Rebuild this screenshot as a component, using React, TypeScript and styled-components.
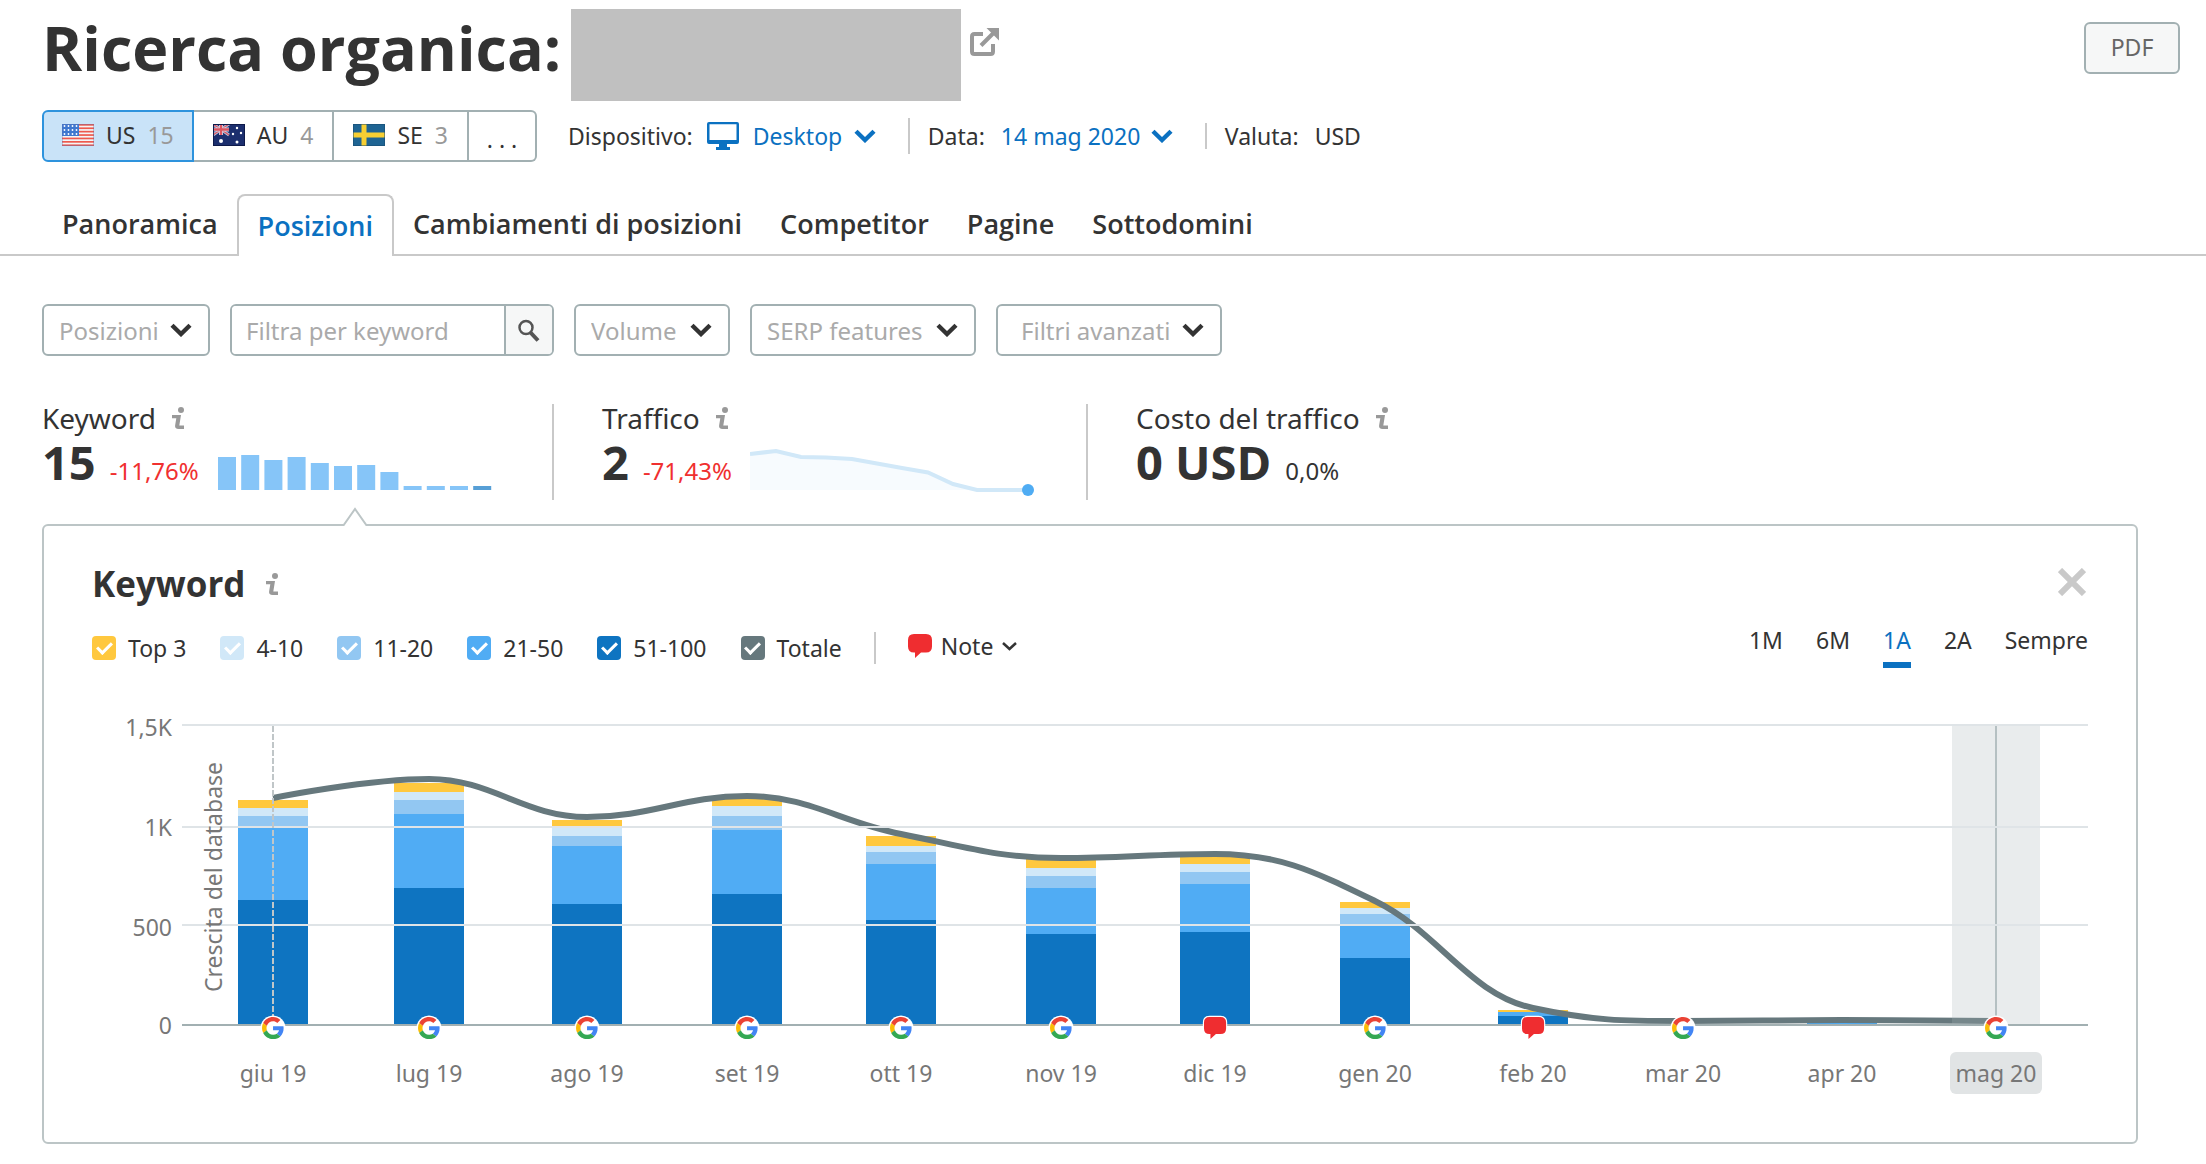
import React from "react";
import styled, { createGlobalStyle } from "styled-components";

const color = {
  text: "#333333",
  muted: "#999999",
  axis: "#777777",
  blue: "#0b71c1",
  red: "#f0302f",
  border: "#a2b0b2",
  line: "#c9c9c9",
  panel: "#bcc5c6",
  soft: "#f6f7f7",
};

const series = {
  top3: "#ffc83e",
  top10: "#d1e8f8",
  top20: "#92c7f2",
  top50: "#50acf4",
  top100: "#0e74c1",
  total: "#66787d",
};

const GlobalStyle = createGlobalStyle`
  *, *::before, *::after { box-sizing: border-box; }
  body {
    margin: 0;
    background: #ffffff;
    color: ${color.text};
    font-family: "Noto Sans", "Open Sans", sans-serif;
    font-size: 23px;
    line-height: 32px;
  }
  button, input, select { font: inherit; color: inherit; }
  svg { display: block; flex: none; }
`;

const Page = styled.main`
  padding: 9px 0 20px;
`;

const Header = styled.header`
  display: flex;
  align-items: flex-start;
  padding: 0 26px 0 42px;
`;

const Title = styled.h1`
  margin: 0;
  min-width: 529px;
  font-family: "Open Sans", "Noto Sans", sans-serif;
  font-size: 61px;
  line-height: 78px;
  font-weight: 700;
  white-space: nowrap;
`;

const DomainBlock = styled.div`
  width: 390px;
  height: 92px;
  background: #c0c0c0;
`;

const ExternalLink = styled.a`
  margin: 19px auto 0 9px;
  color: ${color.muted};
`;

const PdfButton = styled.button`
  width: 96px;
  height: 52px;
  margin-top: 13px;
  padding: 0 0 2px;
  border: 2px solid ${color.border};
  border-radius: 6px;
  background: ${color.soft};
  color: #666666;
`;

const Toolbar = styled.div`
  display: flex;
  align-items: center;
  height: 52px;
  margin-top: 9px;
  padding: 0 42px;
  white-space: nowrap;
`;

const CountryGroup = styled.div`
  display: flex;
  height: 52px;
  margin-right: 31px;
`;

const CountryButton = styled.button<{ $active?: boolean }>`
  display: flex;
  align-items: center;
  gap: 12px;
  padding: 0 ${(p) => (p.$active ? 18 : 19)}px 2px;
  border: 2px solid ${(p) => (p.$active ? "#2e93dd" : color.border)};
  border-left-width: ${(p) => (p.$active ? "2px" : "0")};
  background: ${(p) => (p.$active ? "#c9e3f8" : "#ffffff")};
  &:first-child { border-radius: 6px 0 0 6px; }
  &:last-child {
    justify-content: center;
    width: 68px;
    padding: 6px 0 0;
    border-radius: 0 6px 6px 0;
  }
`;

const Count = styled.span`
  color: ${color.muted};
`;

const Setting = styled.label<{ $gap?: number }>`
  display: flex;
  align-items: center;
  gap: ${(p) => p.$gap ?? 16}px;
`;

const Rule = styled.span<{ $height: number }>`
  width: 2px;
  height: ${(p) => p.$height}px;
  background: ${color.line};
`;

const RuleGap = styled.span<{ $wide?: boolean }>`
  display: flex;
  padding: 0 ${(p) => (p.$wide ? "32px 0 32px" : "18px 0 32px")};
`;

const LinkSelectBox = styled.span<{ $width: number }>`
  display: flex;
  align-items: center;
  width: ${(p) => p.$width}px;
  color: ${color.blue};
  svg { margin-left: -22px; pointer-events: none; }
`;

const LinkSelect = styled.select`
  appearance: none;
  flex: 1;
  min-width: 0;
  padding: 0;
  border: 0;
  background: none;
  cursor: pointer;
`;

const Tabs = styled.nav`
  display: flex;
  height: 62px;
  margin-top: 32px;
  padding-left: 43px;
  border-bottom: 2px solid ${color.line};
  font-family: "Open Sans", "Noto Sans", sans-serif;
  font-size: 27px;
  font-weight: 600;
`;

const Tab = styled.a<{ $active?: boolean }>`
  display: flex;
  align-items: center;
  height: 62px;
  padding: 0 19px ${(p) => (p.$active ? 0 : 2)}px;
  border: 2px solid ${(p) => (p.$active ? color.line : "transparent")};
  border-width: ${(p) => (p.$active ? "2px 2px 0" : "0")};
  border-radius: 8px 8px 0 0;
  background: ${(p) => (p.$active ? "#ffffff" : "transparent")};
  color: ${(p) => (p.$active ? color.blue : color.text)};
  text-decoration: none;
  white-space: nowrap;
`;

const Filters = styled.form`
  display: flex;
  gap: 20px;
  margin-top: 48px;
  padding: 0 42px;
  font-size: 24px;
`;

const SelectBox = styled.span<{ $width: number }>`
  display: flex;
  align-items: center;
  width: ${(p) => p.$width}px;
  svg { margin-left: -40px; pointer-events: none; }
`;

const FilterSelect = styled.select<{ $indent?: number }>`
  appearance: none;
  width: 100%;
  height: 52px;
  padding: 2px 0 0 ${(p) => p.$indent ?? 15}px;
  border: 2px solid ${color.border};
  border-radius: 6px;
  background: #ffffff;
  color: #aaaaaa;
`;

const SearchBox = styled.div`
  display: flex;
  width: 324px;
  height: 52px;
  border: 2px solid ${color.border};
  border-radius: 6px;
  overflow: hidden;
`;

const SearchInput = styled.input`
  flex: 1;
  min-width: 0;
  padding: 2px 14px 0;
  border: 0;
  &::placeholder { color: #aaaaaa; opacity: 1; }
`;

const SearchButton = styled.button`
  display: grid;
  place-items: center;
  width: 48px;
  padding: 0;
  border: 0;
  border-left: 2px solid ${color.border};
  background: ${color.soft};
`;

const Stats = styled.section`
  display: flex;
  margin-top: 48px;
  padding: 0 42px;
`;

const Stat = styled.div<{ $width?: number; $lead: number }>`
  width: ${(p) => (p.$width ? `${p.$width}px` : "auto")};
  height: 96px;
  padding-left: ${(p) => p.$lead}px;
  border-right: ${(p) => (p.$width ? `2px solid ${color.line}` : "0")};
`;

const StatLabel = styled.div`
  display: flex;
  align-items: center;
  gap: 16px;
  height: 28px;
  font-size: 28px;
`;

const StatBody = styled.div`
  display: flex;
  align-items: flex-end;
  height: 64px;
`;

const StatFigures = styled.div<{ $width?: number }>`
  display: flex;
  align-items: baseline;
  gap: 14px;
  min-width: ${(p) => p.$width ?? 0}px;
  height: 62px;
  white-space: nowrap;
`;

const StatValue = styled.strong`
  font-family: "Open Sans", "Noto Sans", sans-serif;
  font-size: 47px;
  line-height: 56px;
  font-weight: 700;
`;

const StatDelta = styled.span<{ $negative?: boolean }>`
  font-size: 24px;
  color: ${(p) => (p.$negative ? color.red : color.text)};
`;

const Panel = styled.section`
  position: relative;
  margin: 24px 68px 0 42px;
  padding: 38px 48px 46px;
  border: 2px solid ${color.panel};
  border-radius: 6px;
`;

const PanelArrow = styled.svg`
  position: absolute;
  top: -19px;
  left: 298px;
`;

const PanelHead = styled.div`
  display: flex;
  align-items: center;
  gap: 20px;
  height: 40px;
`;

const PanelTitle = styled.h2`
  margin: 0;
  font-family: "Open Sans", "Noto Sans", sans-serif;
  font-size: 35px;
  line-height: 40px;
  font-weight: 700;
`;

const CloseButton = styled.button`
  margin: 0 0 4px auto;
  padding: 0 2px;
  border: 0;
  background: none;
`;

const Controls = styled.div`
  display: flex;
  align-items: center;
  height: 48px;
  margin-top: 20px;
  white-space: nowrap;
`;

const Legend = styled.div`
  display: flex;
  gap: 34px;
`;

const LegendItem = styled.label`
  display: flex;
  align-items: center;
  gap: 12px;
`;

const Tick = styled.input<{ $fill: string }>`
  appearance: none;
  display: grid;
  place-items: center;
  width: 24px;
  height: 24px;
  margin: 0;
  border-radius: 4px;
  background: ${(p) => p.$fill};
  &:checked::before {
    content: "";
    width: 15px;
    height: 9px;
    margin-top: -4px;
    border: solid #ffffff;
    border-width: 0 0 3px 3px;
    transform: rotate(-45deg);
  }
`;

const NoteButton = styled.button`
  display: flex;
  align-items: center;
  gap: 9px;
  padding: 0 0 4px;
  border: 0;
  background: none;
`;

const Ranges = styled.div`
  display: flex;
  gap: 33px;
  height: 48px;
  margin-left: auto;
`;

const RangeButton = styled.button<{ $active?: boolean }>`
  height: 44px;
  padding: 0 0 6px;
  border: 0;
  border-bottom: 6px solid ${(p) => (p.$active ? color.blue : "transparent")};
  background: none;
  color: ${(p) => (p.$active ? color.blue : color.text)};
`;

const ChartSvg = styled.svg`
  width: 100%;
  height: auto;
  margin-top: 28px;
  fill: ${color.axis};
  font-size: 23px;
`;

function Chevron() {
  return (
    <svg width="22" height="14" viewBox="0 0 22 14" fill="none" stroke="currentColor" strokeWidth="4.400" aria-hidden="true">
      <path d="M2 2.200 11 11 20 2.200" />
    </svg>
  );
}

function InfoIcon() {
  return (
    <svg width="12" height="22" viewBox="0 0 12 22" fill={color.muted} role="img" aria-label="Info">
      <circle cx="9" cy="3" r="3" />
      <path d="M0 8h9L7.300 18.600H12V22H6.600Q2.600 22 3.100 18.600L4.300 11.300H0z" />
    </svg>
  );
}

function NoteShape() {
  return <path fill="#ef2d30" d="M6 0h12q6 0 6 6v6.500q0 6-6 6h-5L7 24v-5.500H6q-6 0-6-6V6q0-6 6-6z" />;
}

function Star({ x, y, r }: { x: number; y: number; r: number }) {
  return <circle cx={x} cy={y} r={r} fill="#fff" />;
}

function FlagUS() {
  return (
    <svg width="32" height="22" viewBox="0 0 32 22" aria-hidden="true">
      <rect width="32" height="22" fill="#f4f4f6" />
      {[0, 1, 2, 3, 4, 5, 6].map((i) => (
        <rect key={i} y={i * 3.4} width="32" height="1.700" fill="#ee5a4e" />
      ))}
      <rect width="17" height="12" fill="#3f78cf" />
      {[2.5, 6.5, 10.5, 14.5].map((x) => [2, 6, 10].map((y) => <Star key={`${x}-${y}`} x={x} y={y} r={0.9} />))}
      <rect x="0.500" y="0.500" width="31" height="21" fill="none" stroke="#5b6fb0" strokeOpacity="0.350" />
    </svg>
  );
}

function FlagAU() {
  return (
    <svg width="32" height="22" viewBox="0 0 32 22" aria-hidden="true">
      <rect width="32" height="22" fill="#1c2f6e" />
      <path d="M0 0 16 11M16 0 0 11" stroke="#b9c1dc" strokeWidth="3" />
      <path d="M0 0 16 11M16 0 0 11" stroke="#dd5560" strokeWidth="1.200" />
      <path d="M8 0v11M0 5.500h16" stroke="#d5daea" strokeWidth="4" />
      <path d="M8 0v11M0 5.500h16" stroke="#dd5560" strokeWidth="2.400" />
      <Star x={8} y={17} r={2} />
      <Star x={24} y={4} r={1.2} />
      <Star x={20} y={10} r={1.2} />
      <Star x={28} y={9} r={1.2} />
      <Star x={24} y={18} r={1.5} />
      <rect x="0.500" y="0.500" width="31" height="21" fill="none" stroke="#0e1a4a" />
    </svg>
  );
}

function FlagSE() {
  return (
    <svg width="32" height="22" viewBox="0 0 32 22" aria-hidden="true">
      <rect width="32" height="22" fill="#1e6493" />
      <path d="M11 0v22M0 11h32" stroke="#f7cf33" strokeWidth="5" />
      <rect x="0.500" y="0.500" width="31" height="21" fill="none" stroke="#16476b" strokeOpacity="0.500" />
    </svg>
  );
}

const bars = [457, 455, 460, 457, 463, 466, 465, 472, 486, 486, 486, 486];

function KeywordSpark() {
  return (
    <svg width="274" height="48" viewBox="0 0 274 48" role="img" aria-label="Andamento keyword">
      {bars.map((top, i) => (
        <rect key={i} x={i * 23.2} y={top - 448} width="18" height={490 - top} fill={i === 11 ? "#579fd6" : "#86c5f8"} />
      ))}
    </svg>
  );
}

function TrafficSpark() {
  const line = "M0 6 26 3 51 9 76 9.500 102 11 127 15.500 152 20 178 24.500 203 36 227 42 253 42 278 42";
  return (
    <svg width="284" height="48" viewBox="0 0 284 48" role="img" aria-label="Andamento traffico">
      <path d={`${line}V42H0z`} fill="#f7fbfe" />
      <path d={line} fill="none" stroke="#d1e8f8" strokeWidth="4" />
      <circle cx="278" cy="42" r="6" fill="#4facf3" />
    </svg>
  );
}

type Month = { label: string; x: number; tops: number[]; total: number; pin?: "g" | "note" };

const months: Month[] = [
  { label: "giu 19", x: 181, tops: [80, 88, 96, 107, 180], total: 78, pin: "g" },
  { label: "lug 19", x: 337, tops: [63, 72, 80, 94, 168], total: 59, pin: "g" },
  { label: "ago 19", x: 495, tops: [100, 107, 116, 126, 184], total: 97, pin: "g" },
  { label: "set 19", x: 655, tops: [78, 86, 96, 110, 174], total: 76, pin: "g" },
  { label: "ott 19", x: 809, tops: [116, 126, 132, 144, 200], total: 114, pin: "g" },
  { label: "nov 19", x: 969, tops: [139, 148, 156, 168, 214], total: 138, pin: "g" },
  { label: "dic 19", x: 1123, tops: [136, 144, 152, 164, 212], total: 134, pin: "note" },
  { label: "gen 20", x: 1283, tops: [182, 188, 194, 204, 238], total: 181, pin: "g" },
  { label: "feb 20", x: 1441, tops: [290, 292, 292, 292, 296], total: 288, pin: "note" },
  { label: "mar 20", x: 1591, tops: [], total: 301, pin: "g" },
  { label: "apr 20", x: 1750, tops: [], total: 300 },
  { label: "mag 20", x: 1904, tops: [], total: 301, pin: "g" },
];

const barFills = [series.top3, series.top10, series.top20, series.top50, series.top100];
const baseY = 304;

// Spline whose control points never overshoot the neighbouring values.
function splinePath(points: { x: number; y: number }[]) {
  const s = 1.5;
  let d = `M${points[0].x} ${points[0].y}`;
  let right = points[0];
  for (let i = 1; i < points.length; i++) {
    const p = points[i];
    const prev = points[i - 1];
    const next = points[i + 1];
    let left = p;
    let nextRight = p;
    if (next) {
      const lx = (s * p.x + prev.x) / (s + 1);
      let ly = (s * p.y + prev.y) / (s + 1);
      const rx = (s * p.x + next.x) / (s + 1);
      let ry = (s * p.y + next.y) / (s + 1);
      const fix = ((ry - ly) * (rx - p.x)) / (rx - lx) + p.y - ry;
      ly += fix;
      ry += fix;
      const clamp = (v: number, a: number, b: number) => Math.max(Math.min(a, b), Math.min(Math.max(a, b), v));
      const boundedLeft = clamp(ly, prev.y, p.y);
      if (boundedLeft !== ly) { ly = boundedLeft; ry = 2 * p.y - ly; }
      const boundedRight = clamp(ry, next.y, p.y);
      if (boundedRight !== ry) { ry = boundedRight; ly = 2 * p.y - ry; }
      left = { x: lx, y: ly };
      nextRight = { x: rx, y: ry };
    }
    d += `C${right.x} ${right.y} ${left.x} ${left.y} ${p.x} ${p.y}`;
    right = nextRight;
  }
  return d;
}

function GooglePin({ x }: { x: number }) {
  return (
    <g transform={`translate(${x} 308)`}>
      <circle r="12.500" fill="#ffffff" />
      <g transform="translate(-11 -11) scale(0.460)">
        <path fill="#ea4335" d="M24 9.500c3.540 0 6.710 1.220 9.210 3.600l6.850-6.850C35.900 2.380 30.470 0 24 0 14.620 0 6.510 5.380 2.560 13.220l7.980 6.190C12.430 13.720 17.740 9.500 24 9.500z" />
        <path fill="#4285f4" d="M46.980 24.550c0-1.570-.15-3.090-.38-4.550H24v9.020h12.940c-.58 2.960-2.260 5.480-4.780 7.180l7.730 6c4.510-4.180 7.090-10.360 7.090-17.650z" />
        <path fill="#fbbc05" d="M10.530 28.590c-.48-1.450-.76-2.990-.76-4.590s.27-3.140.76-4.590l-7.980-6.190C.92 16.460 0 20.120 0 24c0 3.880.92 7.540 2.560 10.780l7.970-6.190z" />
        <path fill="#34a853" d="M24 48c6.480 0 11.930-2.130 15.890-5.810l-7.730-6c-2.150 1.450-4.920 2.300-8.160 2.300-6.260 0-11.570-4.220-13.470-9.910l-7.980 6.190C6.510 42.620 14.620 48 24 48z" />
      </g>
    </g>
  );
}

function NotePin({ x }: { x: number }) {
  return (
    <g transform={`translate(${x - 11} 297) scale(0.920)`}>
      <g stroke="#ffffff" strokeWidth="2.500"><NoteShape /></g>
      <NoteShape />
    </g>
  );
}

function KeywordChart() {
  return (
    <ChartSvg viewBox="0 -20 1996 396" role="img" aria-label="Keyword per mese">
      {months.map((m) =>
        m.tops.map((top, i) => (
          <rect key={`${m.label}-${i}`} x={m.x - 35} y={top} width="70" height={(m.tops[i + 1] ?? baseY) - top} fill={barFills[i]} />
        ))
      )}
      <rect x="1715" y="303" width="70" height="1" fill={series.top50} />
      <path d={splinePath(months.map((m) => ({ x: m.x, y: m.total })))} fill="none" stroke={series.total} strokeWidth="6" />
      <rect x="1860" y="6" width="88" height="298" fill="#a7b5b9" fillOpacity="0.250" />
      <rect x="1903" y="6" width="2" height="298" fill="#b5c0c2" />
      {[4, 106, 204].map((y) => (
        <rect key={y} x="90" y={y} width="1906" height="2" fill="#dfe4e7" />
      ))}
      <rect x="90" y="304" width="1906" height="2" fill={color.border} />
      <path d="M181 6V298" stroke="#c0c6c8" strokeWidth="2" strokeDasharray="6 2" />
      {[["1,5K", 16], ["1K", 116], ["500", 216], ["0", 314]].map(([label, y]) => (
        <text key={label} x="80" y={y} textAnchor="end">{label}</text>
      ))}
      <text transform="translate(130 272) rotate(-90)">Crescita del database</text>
      <rect x="1858" y="332" width="92" height="42" rx="6" fill="#e1e4e5" />
      {months.map((m) => (
        <text key={m.label} x={m.x} y="362" textAnchor="middle">{m.label}</text>
      ))}
      {months.map((m) =>
        m.pin === "g" ? <GooglePin key={m.label} x={m.x} /> : m.pin === "note" ? <NotePin key={m.label} x={m.x} /> : null
      )}
    </ChartSvg>
  );
}

const tabs = ["Panoramica", "Posizioni", "Cambiamenti di posizioni", "Competitor", "Pagine", "Sottodomini"];

const legend = [
  ["Top 3", series.top3],
  ["4-10", series.top10],
  ["11-20", series.top20],
  ["21-50", series.top50],
  ["51-100", series.top100],
  ["Totale", series.total],
];

function Filter({ label, width, indent }: { label: string; width: number; indent?: number }) {
  return (
    <SelectBox $width={width}>
      <FilterSelect aria-label={label} $indent={indent}>
        <option>{label}</option>
      </FilterSelect>
      <Chevron />
    </SelectBox>
  );
}

export default function App() {
  return (
    <>
      <GlobalStyle />
      <Page>
        <Header>
          <Title>Ricerca organica:</Title>
          <DomainBlock />
          <ExternalLink href="#" aria-label="Apri il sito">
            <svg width="29" height="29" viewBox="0 0 29 29" fill="none" stroke="currentColor" strokeWidth="4">
              <path d="M13 6H4.500Q2 6 2 8.500V23.500Q2 26 4.500 26H20.500Q23 26 23 23.500V16" />
              <path d="M11 17.500 25 3.500" />
              <path d="M16.500 0H29V12.500L25 8.500 21 4.500Z" fill="currentColor" stroke="none" />
            </svg>
          </ExternalLink>
          <PdfButton type="button">PDF</PdfButton>
        </Header>

        <Toolbar>
          <CountryGroup>
            <CountryButton type="button" $active><FlagUS /><span>US</span><Count>15</Count></CountryButton>
            <CountryButton type="button"><FlagAU /><span>AU</span><Count>4</Count></CountryButton>
            <CountryButton type="button"><FlagSE /><span>SE</span><Count>3</Count></CountryButton>
            <CountryButton type="button" aria-label="Altri paesi">. . .</CountryButton>
          </CountryGroup>
          <Setting $gap={14}>
            Dispositivo:
            <svg width="32" height="28" viewBox="0 0 32 28" fill={color.blue} aria-hidden="true">
              <path fillRule="evenodd" d="M2 0h28q2 0 2 2v18q0 2-2 2H20v3h3v3H9v-3h3v-3H2q-2 0-2-2V2Q0 0 2 0zM2.500 2.200V18h27V2.200z" />
            </svg>
            <LinkSelectBox $width={123}>
              <LinkSelect><option>Desktop</option></LinkSelect>
              <Chevron />
            </LinkSelectBox>
          </Setting>
          <RuleGap><Rule $height={36} /></RuleGap>
          <Setting>
            Data:
            <LinkSelectBox $width={172}>
              <LinkSelect><option>14 mag 2020</option></LinkSelect>
              <Chevron />
            </LinkSelectBox>
          </Setting>
          <RuleGap><Rule $height={26} /></RuleGap>
          <Setting as="div"><span>Valuta:</span><span>USD</span></Setting>
        </Toolbar>

        <Tabs>
          {tabs.map((t, i) => (
            <Tab key={t} href="#" $active={i === 1}>{t}</Tab>
          ))}
        </Tabs>

        <Filters>
          <Filter label="Posizioni" width={168} />
          <SearchBox>
            <SearchInput aria-label="Filtra per keyword" placeholder="Filtra per keyword" />
            <SearchButton type="button" aria-label="Cerca">
              <svg width="22" height="23" viewBox="0 0 22 23" fill="none" stroke="#555" aria-hidden="true">
                <circle cx="8" cy="8.500" r="6.500" strokeWidth="2.500" />
                <path d="M12.500 13.500 20 21.500" strokeWidth="4" />
              </svg>
            </SearchButton>
          </SearchBox>
          <Filter label="Volume" width={156} />
          <Filter label="SERP features" width={226} />
          <Filter label="Filtri avanzati" width={226} indent={23} />
        </Filters>

        <Stats>
          <Stat $width={512} $lead={0}>
            <StatLabel>Keyword <InfoIcon /></StatLabel>
            <StatBody>
              <StatFigures $width={176}><StatValue>15</StatValue><StatDelta $negative>-11,76%</StatDelta></StatFigures>
              <KeywordSpark />
            </StatBody>
          </Stat>
          <Stat $width={534} $lead={48}>
            <StatLabel>Traffico <InfoIcon /></StatLabel>
            <StatBody>
              <StatFigures $width={148}><StatValue>2</StatValue><StatDelta $negative>-71,43%</StatDelta></StatFigures>
              <TrafficSpark />
            </StatBody>
          </Stat>
          <Stat $lead={48}>
            <StatLabel>Costo del traffico <InfoIcon /></StatLabel>
            <StatBody>
              <StatFigures><StatValue>0 USD</StatValue><StatDelta>0,0%</StatDelta></StatFigures>
            </StatBody>
          </Stat>
        </Stats>

        <Panel>
          <PanelArrow width="28" height="19" viewBox="0 0 28 19" aria-hidden="true">
            <path d="M1 19 13 2 25 19" fill="#ffffff" stroke={color.panel} strokeWidth="2" />
          </PanelArrow>
          <PanelHead>
            <PanelTitle>Keyword</PanelTitle>
            <InfoIcon />
            <CloseButton type="button" aria-label="Chiudi">
              <svg width="28" height="28" viewBox="0 0 28 28" stroke={color.line} strokeWidth="6">
                <path d="M2 2 26 26M26 2 2 26" />
              </svg>
            </CloseButton>
          </PanelHead>
          <Controls>
            <Legend>
              {legend.map(([label, fill]) => (
                <LegendItem key={label}>
                  <Tick type="checkbox" defaultChecked $fill={fill} />
                  {label}
                </LegendItem>
              ))}
            </Legend>
            <RuleGap $wide><Rule $height={32} /></RuleGap>
            <NoteButton type="button">
              <svg width="24" height="24" viewBox="0 0 24 24" aria-hidden="true"><NoteShape /></svg>
              Note
              <svg width="15" height="9" viewBox="0 0 15 9" fill="none" stroke="currentColor" strokeWidth="2.500" aria-hidden="true">
                <path d="M1 1 7.500 7 14 1" />
              </svg>
            </NoteButton>
            <Ranges>
              {["1M", "6M", "1A", "2A", "Sempre"].map((r) => (
                <RangeButton key={r} type="button" $active={r === "1A"}>{r}</RangeButton>
              ))}
            </Ranges>
          </Controls>
          <KeywordChart />
        </Panel>
      </Page>
    </>
  );
}
